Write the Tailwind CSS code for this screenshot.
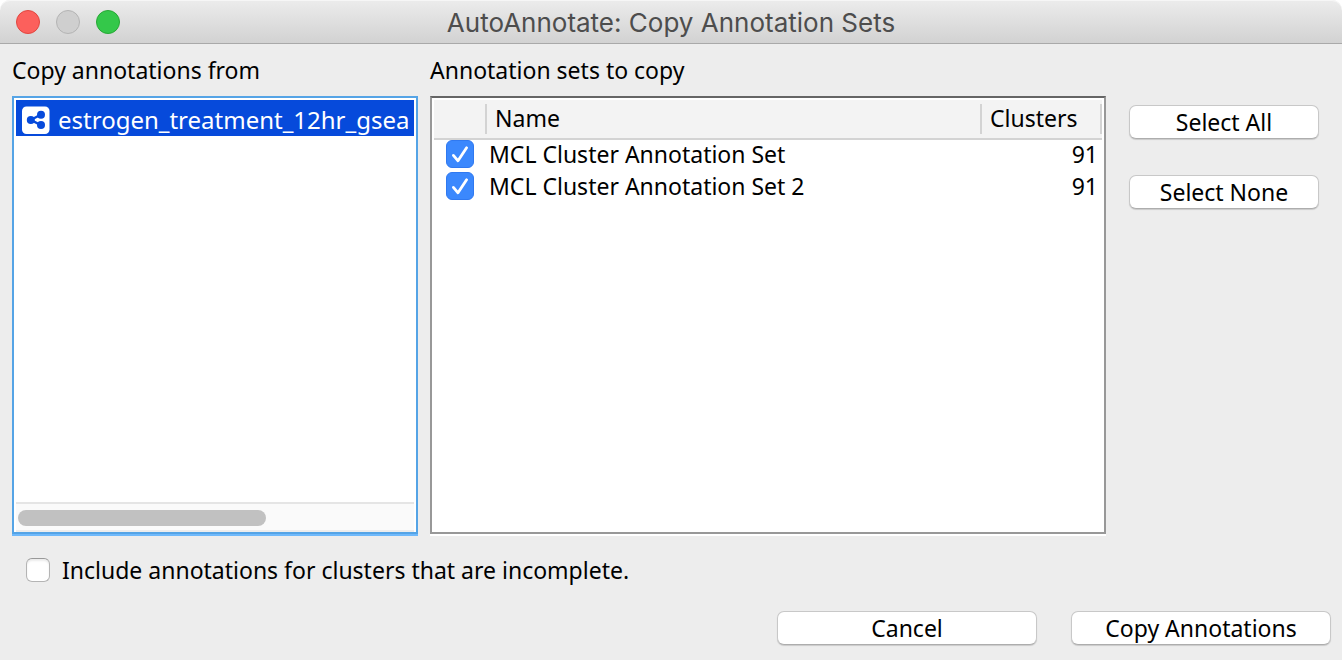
<!DOCTYPE html>
<html lang="en">
<head>
<meta charset="utf-8">
<meta name="viewport" content="width=device-width, initial-scale=1">
<title>AutoAnnotate: Copy Annotation Sets</title>
<script src="https://cdn.jsdelivr.net/npm/@tailwindcss/browser@4"></script>
</head>
<body class="flex min-h-screen flex-col overflow-hidden bg-white font-['Noto_Sans',sans-serif] text-[23px] leading-8 text-black">
<header class="grid h-11 shrink-0 grid-cols-[1fr_auto_1fr] items-center rounded-t-[10px] border-b border-[#a9a9a9] bg-linear-to-b from-[#ececec] to-[#d2d2d2] px-4 shadow-[inset_0_1px_0_#f6f6f6]">
  <div class="flex gap-4">
    <button type="button" aria-label="Close" class="size-6 rounded-full border border-[#e2463f] bg-[#fc605c]"></button>
    <button type="button" aria-label="Minimize" disabled class="size-6 rounded-full border border-[#b4b4b4] bg-[#cfcfcf]"></button>
    <button type="button" aria-label="Zoom" class="size-6 rounded-full border border-[#27a835] bg-[#34c84a]"></button>
  </div>
  <h1 class="pt-0.5 font-['Inter',sans-serif] text-[26px] leading-8 text-[#4d4d4d]">AutoAnnotate: Copy Annotation Sets</h1>
</header>

<main class="flex flex-1 flex-col bg-[#ededed] pt-2.5 pb-[15px]">
  <div class="grid flex-1 grid-cols-[406fr_711fr_190px] pr-[23px] pl-3">
    <section class="flex min-w-0 flex-col">
      <h2 id="from-label" class="mb-2.5">Copy annotations from</h2>
      <div class="flex flex-1 flex-col border-2 border-[#55a4e6] bg-white px-0.5 pt-0.5 shadow-[0_2px_0_#6fb9fb]">
        <ul role="listbox" aria-labelledby="from-label" class="flex-1 overflow-hidden">
          <li role="option" aria-selected="true" class="flex h-9 items-center gap-2 overflow-hidden bg-[#064adb] pt-1 pl-1.5 text-2xl whitespace-nowrap text-white">
            <svg class="size-7 shrink-0" viewBox="0 0 28 28" aria-hidden="true">
              <rect y="0.5" width="27.5" height="27.5" rx="4.5" fill="#fff"/>
              <path d="M19 8.5 8.8 13.9 19 19.3" fill="none" stroke="#064adb" stroke-width="2.4"/>
              <circle cx="19" cy="8.7" r="4" fill="#064adb"/>
              <circle cx="8.8" cy="13.9" r="4" fill="#064adb"/>
              <circle cx="19" cy="19.1" r="4" fill="#064adb"/>
            </svg>
            <span>estrogen_treatment_12hr_gsea</span>
          </li>
        </ul>
        <div class="h-[30px] border-t-2 border-b-2 border-t-[#e5e5e5] border-b-[#ededed] bg-[#fafafa] px-0.5 pt-1.5">
          <div class="h-4 w-[63%] rounded-full bg-[#c1c1c1]"></div>
        </div>
      </div>
    </section>

    <section class="flex min-w-0 flex-col pr-[23px] pl-3">
      <h2 id="sets-label" class="mb-2.5">Annotation sets to copy</h2>
      <div class="flex-1 border-2 border-[#989898] border-t-[#656565] bg-white p-0.5 shadow-[0_2px_0_#fff]">
        <table aria-labelledby="sets-label" class="w-full table-fixed border-separate border-spacing-0 leading-7">
          <thead>
            <tr class="h-10 bg-[#f3f3f3] text-left">
              <th class="w-[53px] border-b-2 border-[#d3d3d3] p-0 font-normal"><div class="h-[30px] border-r-2 border-[#d3d3d3]"></div></th>
              <th class="border-b-2 border-[#d3d3d3] p-0 font-normal"><div class="h-[30px] border-r-2 border-[#d3d3d3] pl-2">Name</div></th>
              <th class="w-[120px] border-b-2 border-[#d3d3d3] p-0 font-normal"><div class="h-[30px] border-r-2 border-[#d3d3d3] pl-2">Clusters</div></th>
            </tr>
          </thead>
          <tbody>
            <tr class="h-8 align-top">
              <td class="p-0 pl-3">
                <div class="relative size-7">
                  <input id="set-1" type="checkbox" checked class="block size-7 appearance-none rounded-md border border-[#3079f0] bg-[#3b88fd]">
                  <svg class="pointer-events-none absolute inset-0 size-7" viewBox="0 0 28 28" fill="none" stroke="#fff" stroke-width="2.8" stroke-linecap="round" stroke-linejoin="round" aria-hidden="true"><path d="M7.4 15.4 12 20.8 20.6 7.8"/></svg>
                </div>
              </td>
              <td class="p-0 pl-0.5"><label for="set-1">MCL Cluster Annotation Set</label></td>
              <td class="p-0 pr-1 text-right">91</td>
            </tr>
            <tr class="h-8 align-top">
              <td class="p-0 pl-3">
                <div class="relative size-7">
                  <input id="set-2" type="checkbox" checked class="block size-7 appearance-none rounded-md border border-[#3079f0] bg-[#3b88fd]">
                  <svg class="pointer-events-none absolute inset-0 size-7" viewBox="0 0 28 28" fill="none" stroke="#fff" stroke-width="2.8" stroke-linecap="round" stroke-linejoin="round" aria-hidden="true"><path d="M7.4 15.4 12 20.8 20.6 7.8"/></svg>
                </div>
              </td>
              <td class="p-0 pl-0.5"><label for="set-2">MCL Cluster Annotation Set 2</label></td>
              <td class="p-0 pr-1 text-right">91</td>
            </tr>
          </tbody>
        </table>
      </div>
    </section>

    <div class="flex flex-col gap-9 pt-[51px]">
      <button type="button" class="h-[34px] rounded-[7px] border border-[#c8c8c8] border-b-[#adadad] bg-white shadow-[0_1px_1px_#00000026]">Select All</button>
      <button type="button" class="h-[34px] rounded-[7px] border border-[#c8c8c8] border-b-[#adadad] bg-white shadow-[0_1px_1px_#00000026]">Select None</button>
    </div>
  </div>

  <div class="mt-5 flex items-center gap-3 pl-[26px]">
    <input id="incomplete" type="checkbox" class="size-6 appearance-none rounded-[6px] border border-[#b4b4b4] border-t-[#999] bg-white shadow-[inset_0_2px_2px_#00000014]">
    <label for="incomplete">Include annotations for clusters that are incomplete.</label>
  </div>

  <footer class="mt-[25px] flex justify-end gap-[34px] pr-[11px]">
    <button type="button" class="h-[34px] w-[260px] rounded-[7px] border border-[#c8c8c8] border-b-[#adadad] bg-white shadow-[0_1px_1px_#00000026]">Cancel</button>
    <button type="button" class="h-[34px] w-[260px] rounded-[7px] border border-[#c8c8c8] border-b-[#adadad] bg-white shadow-[0_1px_1px_#00000026]">Copy Annotations</button>
  </footer>
</main>
</body>
</html>
